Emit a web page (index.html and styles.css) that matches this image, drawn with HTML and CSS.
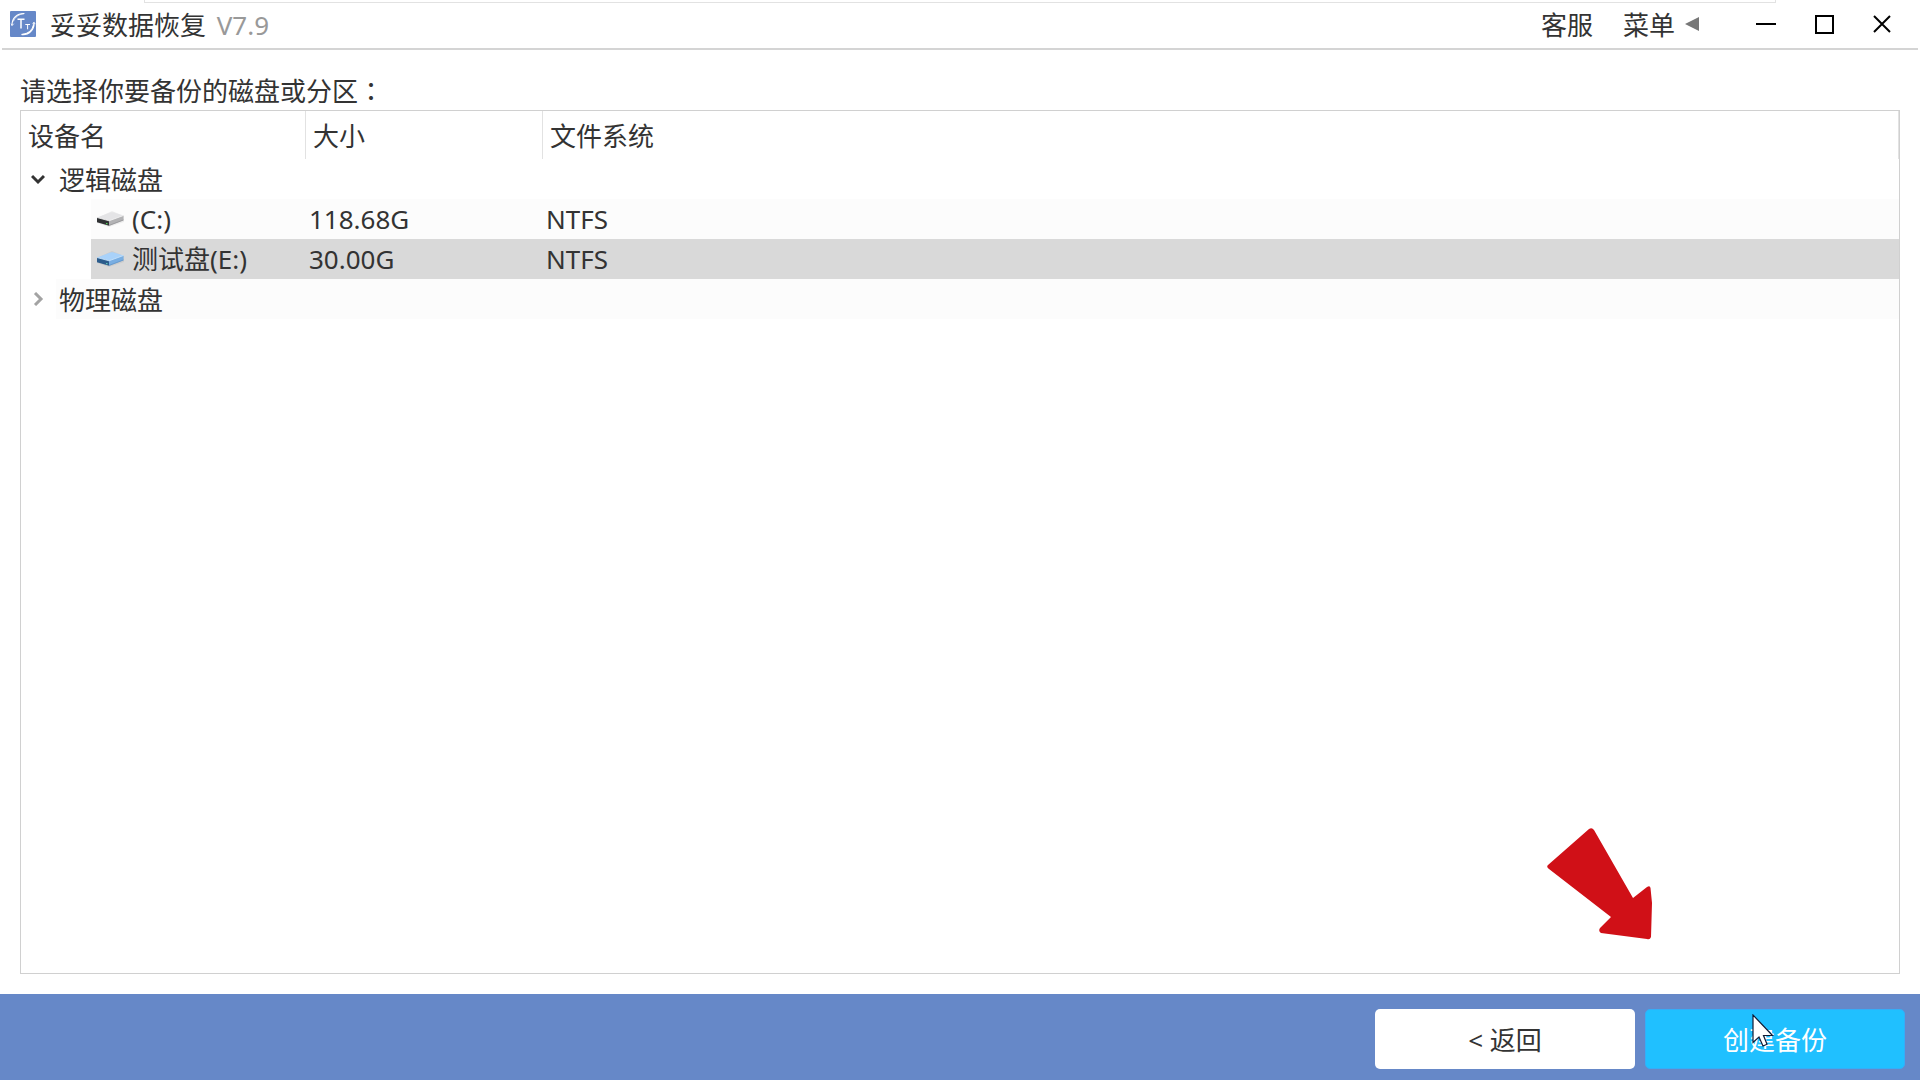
FILE: index.html
```html
<!DOCTYPE html>
<html lang="zh-CN">
<head>
<meta charset="utf-8">
<meta name="viewport" content="width=device-width, initial-scale=1">
<title>妥妥数据恢复 V7.9</title>
<link rel="stylesheet" href="styles.css">
</head>
<body>
<div class="window">
  <div class="window-behind"></div>
  <header class="titlebar">
    <svg class="logo" viewBox="0 0 26 26" aria-hidden="true">
      <rect width="26" height="26" rx="1" fill="#6688c8"/>
      <g fill="none" stroke="#fff" stroke-linecap="round">
        <path d="M2 14C2 7 7 2.500 14 2.500" stroke-width="1.200"/>
        <path d="M3.500 10C5 6 9 3 13.500 2.800" stroke-width=".8"/>
        <path d="M12 23.500C19 24 24 19 24 12" stroke-width="1.400"/>
        <path d="M13 23.300C18 22.500 22 19.500 23.300 14.500" stroke-width="1"/>
        <path d="M1.300 13L2 14.500L3.500 13M22.700 12.500L24.100 11.300L25 12.800" stroke-width=".8"/>
        <path d="M7.500 8.300H14.500M11 8.300V17.500" stroke-width="1.500" stroke-linecap="butt"/>
        <path d="M15.300 13.500H20M17.600 13.500V18.300" stroke-width="1" stroke-linecap="butt"/>
      </g>
    </svg>
    <h1 class="title">妥妥数据恢复 <span class="version">V7.9</span></h1>
    <nav class="menu">
      <button class="menu-item" type="button">客服</button>
      <button class="menu-item" type="button">菜单
        <svg class="menu-caret" viewBox="0 0 14 14" aria-hidden="true"><path d="M0 7L14 0V14Z" fill="#777"/></svg>
      </button>
    </nav>
    <div class="controls">
      <button class="control" type="button" aria-label="最小化"><svg viewBox="0 0 20 20"><path d="M0 10H20" stroke-width="2"/></svg></button>
      <button class="control" type="button" aria-label="最大化"><svg viewBox="0 0 20 20"><path d="M2 2H19V19H2Z" stroke-width="2"/></svg></button>
      <button class="control" type="button" aria-label="关闭"><svg viewBox="0 0 20 20"><path d="M2 2L18 18M18 2L2 18" stroke-width="2"/></svg></button>
    </div>
  </header>

  <main class="content">
    <h2 class="prompt" id="prompt">请选择你要备份的磁盘或分区<span class="colon" lang="zh-TW">：</span></h2>
    <div class="panel">
      <table class="devices" aria-labelledby="prompt">
        <colgroup><col class="col-name"><col class="col-size"><col></colgroup>
        <thead>
          <tr><th scope="col">设备名</th><th scope="col">大小</th><th scope="col">文件系统</th></tr>
        </thead>
        <tbody>
          <tr class="group">
            <td><div class="cell">
              <button class="toggle" type="button" aria-label="折叠" aria-expanded="true"><svg viewBox="0 0 14 14"><path d="M1 4L7 10L13 4" stroke="#333"/></svg></button>
              <span class="label">逻辑磁盘</span>
            </div></td><td></td><td></td>
          </tr>
          <tr class="disk alt">
            <td><div class="cell">
              <span class="label"><svg class="drive" viewBox="0 0 28 18" aria-hidden="true">
                <path d="M1 8L16 1L28 6V12L13 17L1 13Z" fill="#000" opacity=".06"/>
                <path d="M1 7.500L15 2.300Q16 2 17 2.300L27.500 5.500L13 10.800Z" fill="#e4e4e6"/>
                <path d="M13 10.800L27.500 5.500V10.200L13 15.800Z" fill="#b3b3b5"/>
                <path d="M1 7.500L13 10.800V15.800L1 12.300Z" fill="#303234"/>
                <path d="M1 7.500L13 10.800L27.500 5.500" fill="none" stroke="#f5f5f5" stroke-width=".8"/>
                <path d="M13 15.500L27.500 10" stroke="#8e8e90" stroke-width=".7"/>
                <path d="M10 13h1.500v1.200H10Z" fill="#54d05c"/>
              </svg>(C:)</span>
            </div></td><td>118.68G</td><td>NTFS</td>
          </tr>
          <tr class="disk selected" aria-selected="true">
            <td><div class="cell">
              <span class="label"><svg class="drive" viewBox="0 0 28 18" aria-hidden="true">
                <path d="M1 8L16 1L28 6V12L13 17L1 13Z" fill="#000" opacity=".06"/>
                <path d="M1 7.500L15 2.300Q16 2 17 2.300L27.500 5.500L13 10.800Z" fill="#a9d2fa"/>
                <path d="M13 10.800L27.500 5.500V10.200L13 15.800Z" fill="#79aee2"/>
                <path d="M1 7.500L13 10.800V15.800L1 12.300Z" fill="#2b5c8c"/>
                <path d="M1 7.500L13 10.800L27.500 5.500" fill="none" stroke="#c9e6ff" stroke-width=".8"/>
                <path d="M13 15.500L27.500 10" stroke="#5c91c6" stroke-width=".7"/>
                <path d="M10 13h1.500v1.200H10Z" fill="#5fc4b4"/>
              </svg>测试盘(E:)</span>
            </div></td><td>30.00G</td><td>NTFS</td>
          </tr>
          <tr class="group alt">
            <td><div class="cell">
              <button class="toggle" type="button" aria-label="展开" aria-expanded="false"><svg viewBox="0 0 14 14"><path d="M4 1L10 7L4 13" stroke="#a3a3a3"/></svg></button>
              <span class="label">物理磁盘</span>
            </div></td><td></td><td></td>
          </tr>
        </tbody>
      </table>
    </div>
  </main>

  <footer class="footer">
    <button class="action back" type="button">&lt; 返回</button>
    <button class="action create" type="button">创建备份
      <svg class="pointer" viewBox="0 0 22 34" aria-hidden="true"><path d="M1 1V28.500L7 23L11 32L15 30.300L11.500 21.500H20.500Z" fill="#fff" stroke="#111a33" stroke-width="1.200"/></svg>
    </button>
    <svg class="arrow" viewBox="0 0 106 114" aria-hidden="true"><path d="M1 38L42 2Q45 0 47 3L86 71L100 60Q103 58 103.500 61L105 76L104 110Q103 113 100 112L54 106Q51 104 53 101L64 90L2 42Q-1 40 1 38Z" fill="#d01017"/></svg>
  </footer>
</div>
</body>
</html>
```
FILE: styles.css
```css
* {
  box-sizing: border-box;
}

body {
  margin: 0;
  background: #fff;
  color: #333;
  font: 26px/40px "Noto Sans", "Noto Sans CJK SC", sans-serif;
}

button {
  margin: 0;
  padding: 0;
  border: 0;
  background: none;
  color: inherit;
  font: inherit;
}

svg {
  display: block;
}

.window {
  position: relative;
  display: flex;
  flex-direction: column;
  min-height: 100vh;
}

/* edge of the window lying underneath */
.window-behind {
  position: absolute;
  top: 0;
  left: 144px;
  right: 144px;
  height: 3px;
  border: 1px solid #e2e2e2;
  border-top: 0;
}

.titlebar {
  display: flex;
  align-items: center;
  height: 50px;
  margin: 0 2px;
  padding: 0 26px 0 8px;
  border-bottom: 2px solid #d4d4d4;
}

.logo {
  width: 26px;
  height: 26px;
  margin-right: 14px;
}

.title,
.prompt {
  margin: 0;
  font-size: 26px;
  font-weight: 400;
}

.title,
.menu {
  padding-top: 2px;
}

.version {
  margin-left: 4px;
  color: #999;
}

.menu {
  display: flex;
  gap: 30px;
  margin-left: auto;
}

.menu-item {
  display: flex;
  align-items: center;
  gap: 10px;
}

.menu-caret {
  width: 14px;
  height: 14px;
  margin-bottom: 2px;
}

.controls {
  display: flex;
  gap: 38px;
  margin-left: 57px;
}

.control svg {
  width: 20px;
  height: 20px;
  fill: none;
  stroke: #000;
}

.content {
  flex: 1;
  display: flex;
  flex-direction: column;
  padding: 22px 20px 20px;
}

.prompt {
  line-height: 38px;
}

.colon {
  font-family: "Noto Sans CJK TC", sans-serif;
  line-height: 1;
}

.panel {
  flex: 1;
  border: 1px solid #d0d0d0;
}

.devices {
  width: 100%;
  table-layout: fixed;
  border-collapse: separate;
  border-spacing: 0;
}

.col-name {
  width: 285px;
}

.col-size {
  width: 237px;
}

.devices th {
  height: 48px;
  padding: 2px 7px 0;
  border-right: 1px solid #e2e2e2;
  font-weight: 400;
  text-align: left;
}

.devices td {
  height: 40px;
  padding: 0 3px;
}

.devices td:first-child {
  padding: 0;
}

.cell {
  display: flex;
  height: 40px;
}

.toggle {
  width: 35px;
  padding-left: 10px;
}

.toggle svg {
  width: 14px;
  height: 14px;
  fill: none;
  stroke-width: 3;
}

.label {
  flex: 1;
  display: flex;
  align-items: center;
  gap: 8px;
}

.group .label {
  padding: 2px 0 0 3px;
}

.disk .cell {
  padding-left: 70px;
}

.disk .label {
  padding-left: 5px;
}

.drive {
  width: 28px;
  height: 18px;
}

.alt .label,
.alt td + td {
  background: #fcfcfc;
}

.selected .label,
.selected td + td {
  background: #d9d9d9;
}

.footer {
  position: relative;
  display: flex;
  justify-content: flex-end;
  gap: 10px;
  padding: 15px 15px 11px;
  background: #6688c8;
}

.action {
  position: relative;
  width: 260px;
  height: 60px;
  padding-top: 2px;
  border-radius: 5px;
}

.back {
  background: #fff;
}

.create {
  border: 1px solid #35adf8;
  background: #20c0ff;
  color: #fff;
}

.pointer {
  position: absolute;
  top: 4px;
  left: 106px;
  width: 22px;
  height: 34px;
}

.arrow {
  position: absolute;
  right: 267px;
  bottom: 139px;
  width: 106px;
  height: 114px;
}
```
